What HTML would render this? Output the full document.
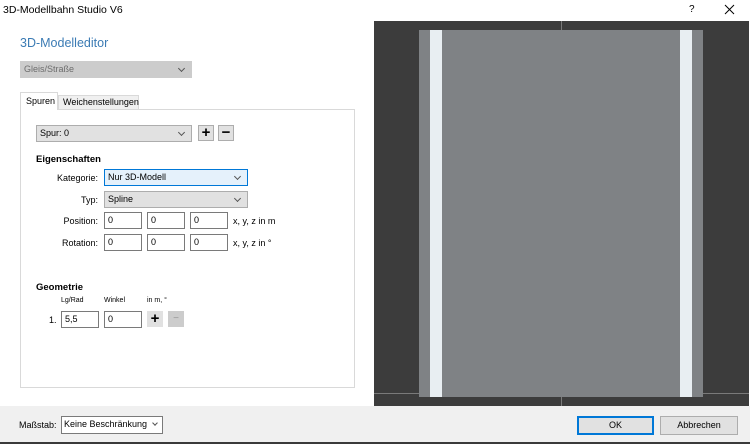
<!DOCTYPE html>
<html><head><meta charset="utf-8"><style>
*{box-sizing:border-box;margin:0;padding:0}
body{width:750px;height:444px;background:#fff;font-family:"Liberation Sans",sans-serif;font-size:9px;color:#000;position:relative;overflow:hidden}
.a{position:absolute}
.inp{position:absolute;border:1px solid #7a7a7a;background:#fff;height:17px;padding:2px 3px;font-size:9px;line-height:11px}
.cb{position:absolute;border:1px solid #adadad;background:#e1e1e1;height:17px;padding:2px 3px;font-size:9px;line-height:11px}
.cb:after{content:"";position:absolute;right:7px;top:4px;width:4px;height:4px;border-right:1px solid #555;border-bottom:1px solid #555;transform:rotate(45deg)}
.btn{position:absolute;border:1px solid #adadad;background:#e1e1e1;width:16px;height:16px;text-align:center;font-size:15px;line-height:13px;font-weight:bold}
.lbl{position:absolute;text-align:right;width:80px}
</style></head><body>
<div class="a" style="left:3px;top:4px;font-size:10.5px">3D-Modellbahn Studio V6</div>
<div class="a" style="left:689px;top:4px;font-size:10px">?</div>
<svg class="a" style="left:724px;top:4px" width="11" height="11"><path d="M1 1L10 10M10 1L1 10" stroke="#000" stroke-width="1"/></svg>
<div class="a" style="left:20px;top:36px;font-size:12.5px;color:#3b7bb4">3D-Modelleditor</div>
<div class="cb" style="left:20px;top:61px;width:172px;background:#cccccc;border-color:#cccccc;color:#6d6d6d">Gleis/Straße</div>
<div class="a" style="left:20px;top:109px;width:335px;height:279px;border:1px solid #d9d9d9;background:#fff"></div>
<div class="a" style="left:20px;top:92px;width:38px;height:18px;border:1px solid #d9d9d9;border-bottom:none;background:#fff;padding:3px 5px">Spuren</div>
<div class="a" style="left:58px;top:95px;width:81px;height:14px;border:1px solid #d9d9d9;border-bottom:none;background:#f0f0f0;padding:1px 4px">Weichenstellungen</div>
<div class="cb" style="left:36px;top:125px;width:156px">Spur: 0</div>
<div class="btn" style="left:198px;top:125px">+</div>
<div class="btn" style="left:218px;top:125px">−</div>
<div class="a" style="left:36px;top:154px;font-weight:bold;font-size:9.5px">Eigenschaften</div>
<div class="lbl" style="left:18px;top:173px">Kategorie:</div>
<div class="cb" style="left:104px;top:169px;width:144px;background:#e5f1fb;border-color:#0078d7">Nur 3D-Modell</div>
<div class="lbl" style="left:18px;top:195px">Typ:</div>
<div class="cb" style="left:104px;top:191px;width:144px">Spline</div>
<div class="lbl" style="left:18px;top:216px">Position:</div>
<div class="inp" style="left:104px;top:212px;width:38px">0</div>
<div class="inp" style="left:147px;top:212px;width:38px">0</div>
<div class="inp" style="left:190px;top:212px;width:38px">0</div>
<div class="a" style="left:233px;top:216px">x, y, z in m</div>
<div class="lbl" style="left:18px;top:238px">Rotation:</div>
<div class="inp" style="left:104px;top:234px;width:38px">0</div>
<div class="inp" style="left:147px;top:234px;width:38px">0</div>
<div class="inp" style="left:190px;top:234px;width:38px">0</div>
<div class="a" style="left:233px;top:238px">x, y, z in °</div>
<div class="a" style="left:36px;top:282px;font-weight:bold;font-size:9.5px">Geometrie</div>
<div class="a" style="left:61px;top:297px;font-size:7px">Lg/Rad</div>
<div class="a" style="left:104px;top:297px;font-size:7px">Winkel</div>
<div class="a" style="left:147px;top:297px;font-size:7px">in m, °</div>
<div class="a" style="left:49px;top:315px">1.</div>
<div class="inp" style="left:61px;top:311px;width:38px">5,5</div>
<div class="inp" style="left:104px;top:311px;width:38px">0</div>
<div class="btn" style="left:147px;top:311px;border-color:#e1e1e1">+</div>
<div class="btn" style="left:168px;top:311px;background:#ccc;border-color:#ccc;color:#999;font-weight:normal;font-size:10px">−</div>
<div class="a" style="left:374px;top:21px;width:375px;height:385px;background:#3c3c3c"></div>
<div class="a" style="left:374px;top:393px;width:375px;height:1px;background:#7a7a7a"></div>
<div class="a" style="left:561px;top:21px;width:1px;height:385px;background:#7a7a7a"></div>
<div class="a" style="left:419px;top:30px;width:284px;height:367px;background:#7f8285"></div>
<div class="a" style="left:430px;top:30px;width:12px;height:367px;background:#e8eef2"></div>
<div class="a" style="left:680px;top:30px;width:12px;height:367px;background:#e8eef2"></div>
<div class="a" style="left:0;top:406px;width:750px;height:38px;background:#f0f0f0"></div>
<div class="a" style="left:0;top:442px;width:750px;height:2px;background:#3a3a3a"></div>
<div class="a" style="left:19px;top:420px">Maßstab:</div>
<div class="inp" style="left:61px;top:416px;width:102px;height:18px;padding-left:2px">Keine Beschränkung</div>
<div class="a" style="left:153px;top:421px;width:4px;height:4px;border-right:1px solid #555;border-bottom:1px solid #555;transform:rotate(45deg)"></div>
<div class="a" style="left:577px;top:416px;width:77px;height:19px;border:2px solid #0078d7;background:#e1e1e1;text-align:center;line-height:15px">OK</div>
<div class="a" style="left:660px;top:416px;width:78px;height:19px;border:1px solid #adadad;background:#e1e1e1;text-align:center;line-height:17px">Abbrechen</div>
</body></html>
